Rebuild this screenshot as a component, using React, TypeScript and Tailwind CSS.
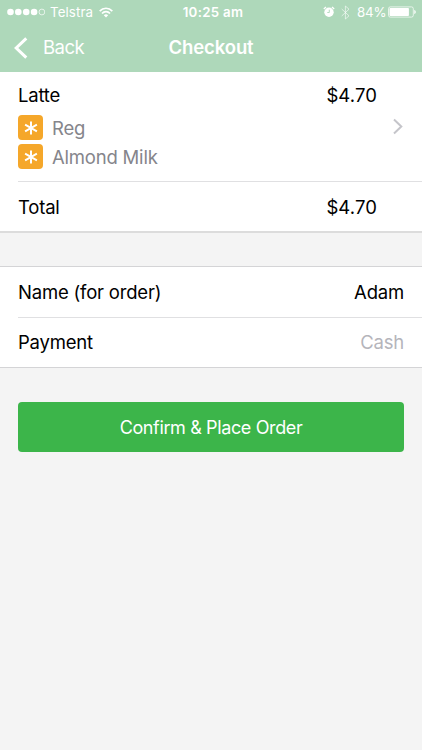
import React from "react";

function StatusBar() {
  return (
    <div className="flex h-6 items-center justify-between pl-[7px] pr-[6px] text-[13.3px] leading-6">
      <div className="flex w-[170px] items-center">
        <svg width="38" height="8" viewBox="0 0 38 8" fill="white" stroke="none">
          <circle cx="3.5" cy="4" r="3.3" />
          <circle cx="11.3" cy="4" r="3.3" />
          <circle cx="19.2" cy="4" r="3.3" />
          <circle cx="27.1" cy="4" r="3.3" />
          <circle cx="34.9" cy="4" r="2.9" fill="none" stroke="white" strokeWidth="0.7" />
        </svg>
        <span className="ml-[5px] w-[42px] whitespace-nowrap tracking-[0.1px]">Telstra</span>
        <svg className="ml-[7px]" width="14" height="11" viewBox="0 0 14 11" fill="none" stroke="white" strokeWidth="1.7">
          <path d="M0.7 4.1C4.3 0.3 9.7 0.3 13.3 4.1" />
          <path d="M3 6.5C5.2 4.1 8.8 4.1 11 6.5" />
          <path d="M4.8 8.2C6.1 6.9 7.9 6.9 9.2 8.2L7 10.5Z" fill="white" stroke="none" />
        </svg>
      </div>
      <span className="whitespace-nowrap pl-[3px] text-[13.3px] font-semibold tracking-[0.3px]">10:25 am</span>
      <div className="flex w-[170px] items-center justify-end">
        <svg width="12" height="12" viewBox="0 0 12 12" fill="none" stroke="white">
          <circle cx="6" cy="6.3" r="4.7" fill="white" stroke="none" />
          <path d="M0.8 3.1L3 1.1M9 1.1L11.2 3.1" strokeWidth="1.3" />
          <path d="M6.3 3.7V6.5H4.3" stroke="#aed8ba" strokeWidth="0.9" />
        </svg>
        <svg className="ml-[6px]" width="9" height="15" viewBox="0 0 9 15" fill="none" stroke="white" strokeOpacity="0.6" strokeWidth="1">
          <path d="M0.7 4L8 10.8L4.4 14V1L8 4.2L0.7 11" />
        </svg>
        <span className="ml-[7px] w-[28px] whitespace-nowrap tracking-[-0.2px]">84%</span>
        <svg className="ml-[3px]" width="28" height="12" viewBox="0 0 28 12" fill="none">
          <rect x="0.5" y="0.9" width="24.8" height="10.2" rx="1.8" stroke="white" strokeWidth="0.7" />
          <rect x="1.5" y="1.9" width="19.4" height="8.2" rx="0.8" fill="white" />
          <path d="M26.3 4C28.2 4.5 28.2 7.5 26.3 8Z" fill="white" />
        </svg>
      </div>
    </div>
  );
}

function Header() {
  return (
    <header className="h-[72px] bg-[#aed8ba] text-white">
      <StatusBar />
      <div className="grid h-[46px] grid-cols-3 items-center">
        <div className="flex items-center pl-[14px]">
          <svg className="mt-[2px]" width="14" height="22" viewBox="0 0 14 22" fill="none" stroke="white" strokeWidth="3">
            <path d="M12.3 1.3L2.2 11L12.3 20.7" />
          </svg>
          <span className="ml-[15px] text-[18.5px] leading-6 tracking-[-0.5px]">Back</span>
        </div>
        <h1 className="whitespace-nowrap text-center text-[18.5px] font-semibold leading-6 tracking-[-0.1px]">Checkout</h1>
      </div>
    </header>
  );
}

function Extra({ name }: { name: string }) {
  return (
    <div className="flex h-[29px] items-center">
      <span className="flex h-[25px] w-[25px] items-center justify-center rounded-[4px] bg-[#f5a72a]">
        <svg width="14" height="14" viewBox="0 0 14 14" stroke="white" strokeWidth="2">
          <path d="M7 0.4V13.6M1.1 3.7L12.9 10.3M12.9 3.7L1.1 10.3" />
        </svg>
      </span>
      <span className="ml-[9px] text-[18.5px] tracking-[-0.2px] text-[#85858b]">{name}</span>
    </div>
  );
}

export default function App() {
  return (
    <div className="min-h-[750px] w-full overflow-hidden bg-[#f4f4f4] font-[Inter,sans-serif] text-[18.5px] leading-6 tracking-[-0.2px] text-black">
      <Header />
      <section className="border-b-2 border-[#dcdcdc] bg-white pl-[18px]">
        <div className="flex h-[110px] justify-between border-b border-[#e0e0e2] pr-[18px] pt-[11px]">
          <div>
            <div className="mb-[6px]">Latte</div>
            <Extra name="Reg" />
            <Extra name="Almond Milk" />
          </div>
          <div className="flex">
            <span className="tracking-[0.1px]">$4.70</span>
            <svg className="ml-[16px] mt-[35px]" width="11" height="17" viewBox="0 0 11 17" fill="none" stroke="#c5c5ca" strokeWidth="2">
              <path d="M1 1.5L8.3 8.5L1 15.5" />
            </svg>
          </div>
        </div>
        <div className="flex h-[49px] items-center justify-between pr-[45px]">
          <span>Total</span>
          <span className="tracking-[0.1px]">$4.70</span>
        </div>
      </section>
      <section className="mt-[33px] border-y border-[#d4d4d6] bg-white pl-[18px]">
        <div className="flex h-[51px] items-center justify-between border-b border-[#e0e0e2] pr-[18px]">
          <span>Name (for order)</span>
          <span>Adam</span>
        </div>
        <div className="flex h-[49px] items-center justify-between pb-[2px] pr-[18px]">
          <span>Payment</span>
          <span className="text-[#b5b5bb]">Cash</span>
        </div>
      </section>
      <div className="px-[18px] pt-[34px]">
        <button className="flex h-[50px] w-full items-center justify-center rounded-[4px] bg-[#3cb54a] pt-[2px] text-[18px] tracking-[-0.37px] text-white">
          Confirm &amp; Place Order
        </button>
      </div>
    </div>
  );
}
